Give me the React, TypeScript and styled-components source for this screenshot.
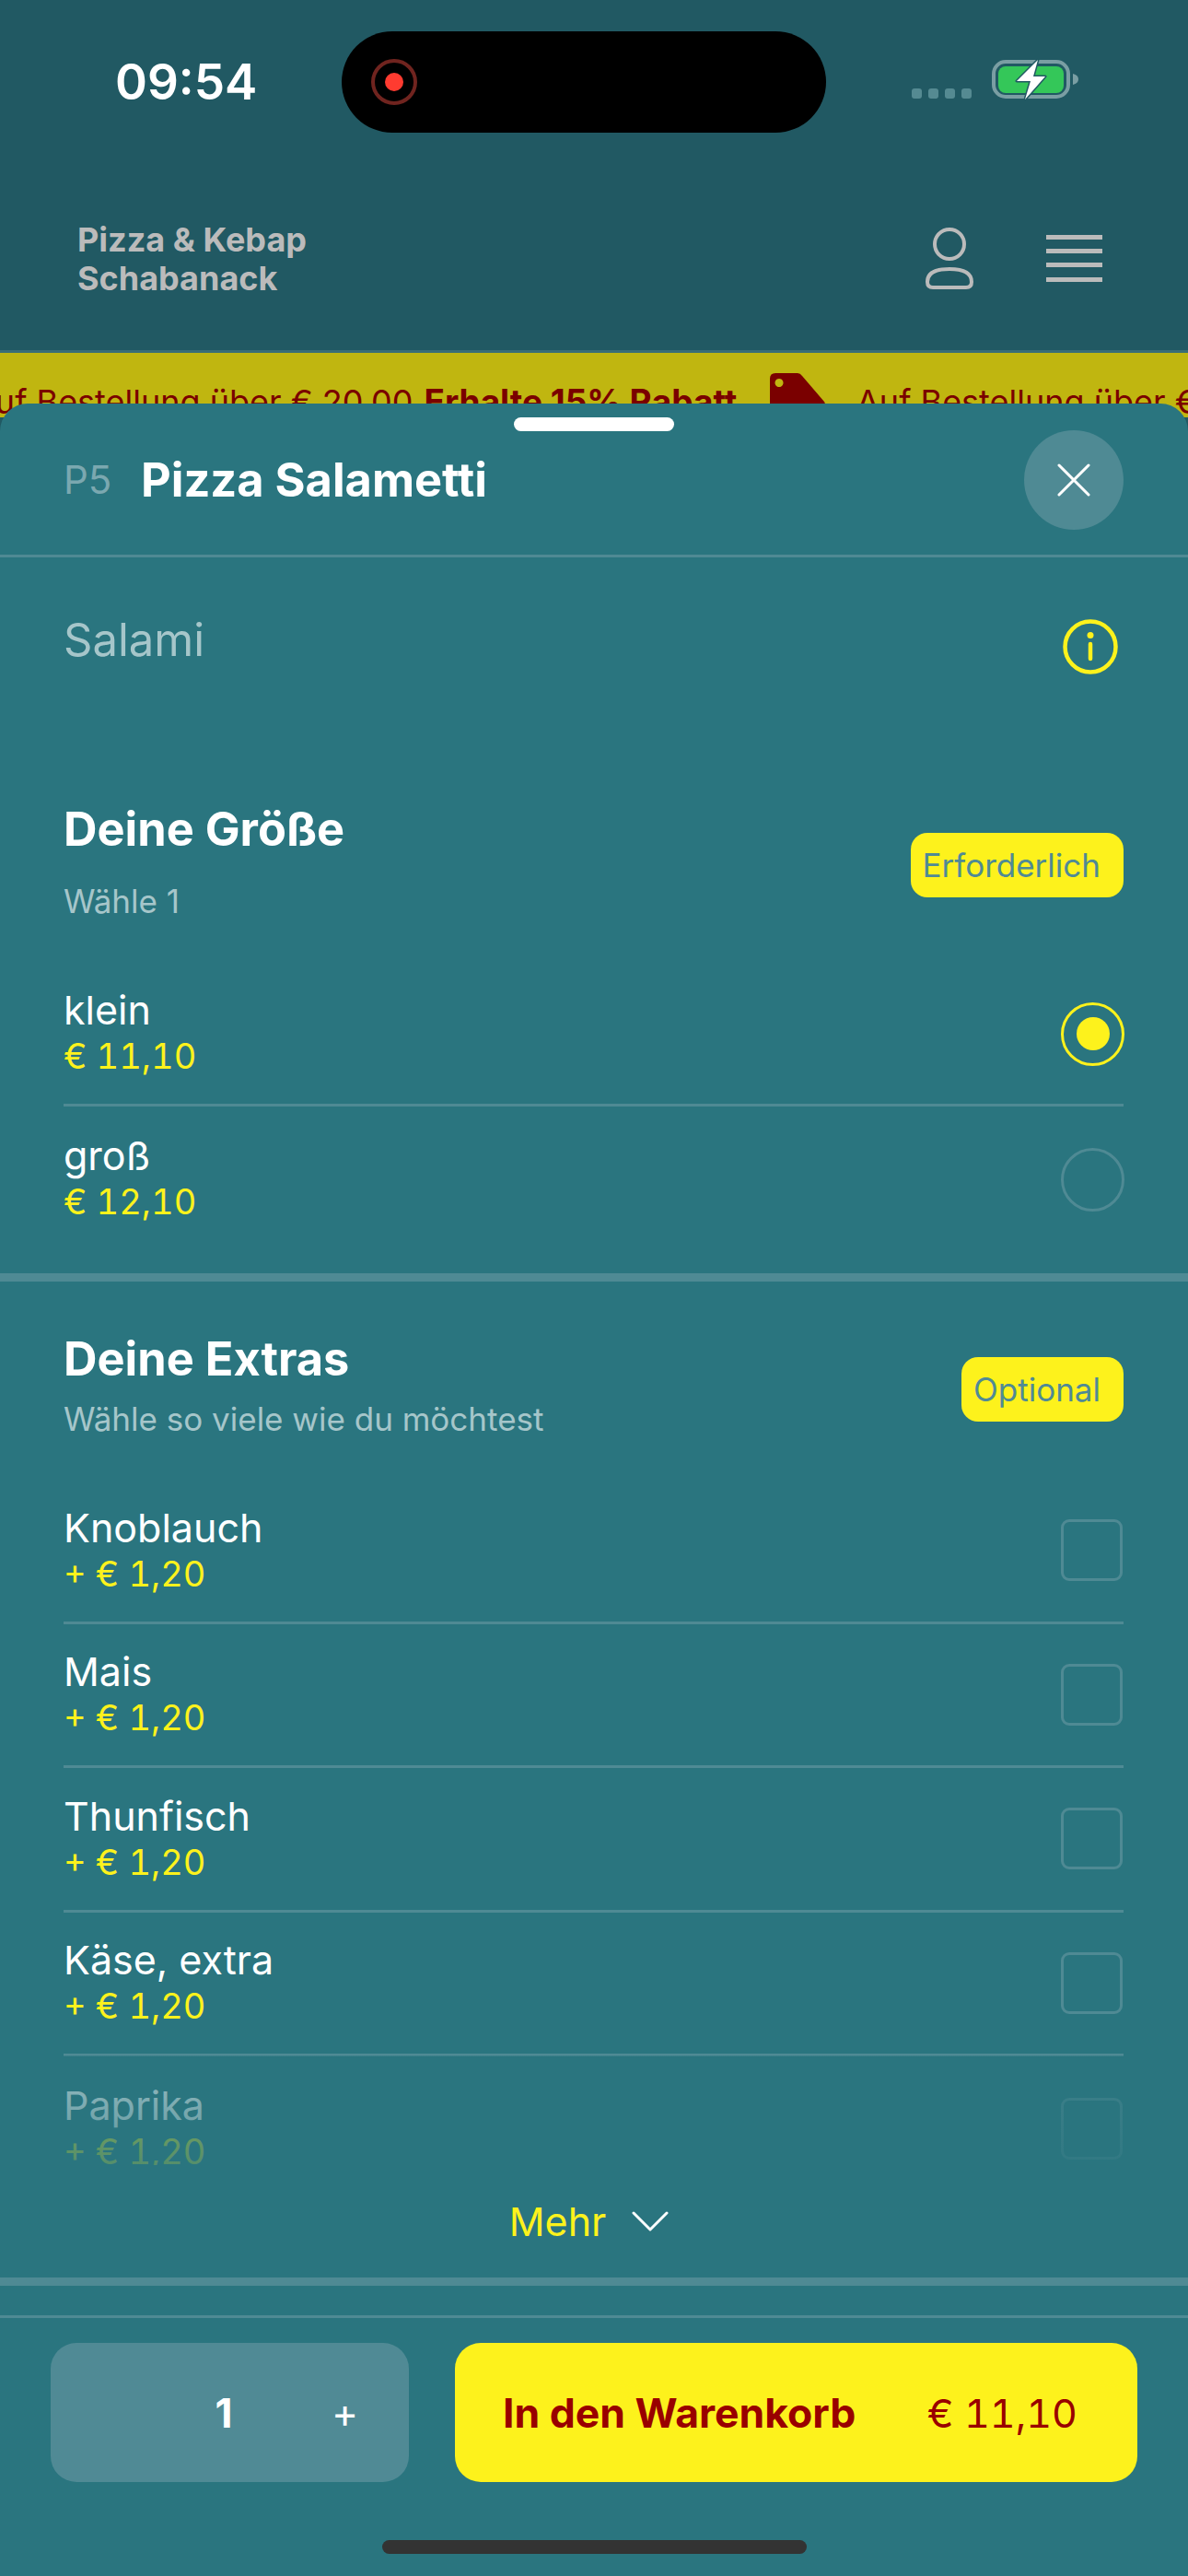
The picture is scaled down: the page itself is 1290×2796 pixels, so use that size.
import React from 'react';
import styled, { createGlobalStyle } from 'styled-components';

const YELLOW = '#fdf21c';
const SHEET = '#2a757f';
const LINE = '#4f8a94';

const GlobalStyle = createGlobalStyle`
    html, body {
        margin: 0;
        padding: 0;
        background: ${SHEET};
    }
    * {
        box-sizing: border-box;
    }
`;

const Page = styled.div`
    position: relative;
    width: 1290px;
    height: 2796px;
    overflow: hidden;
    background: #215963;
    font-family: Inter, "Liberation Sans", sans-serif;
`;

const StatusBar = styled.div`
    display: flex;
    align-items: center;
    height: 110px;
    margin-top: 34px;
    padding-left: 125px;
`;
const Time = styled.span`
    width: 246px;
    color: #fff;
    font-size: 53px;
    font-weight: 600;
`;
const Island = styled.div`
    display: flex;
    align-items: center;
    width: 526px;
    height: 110px;
    padding-left: 32px;
    border-radius: 55px;
    background: #000;
`;
const RecRing = styled.div`
    display: flex;
    align-items: center;
    justify-content: center;
    width: 50px;
    height: 50px;
    border: 4px solid #70241f;
    border-radius: 50%;
    &::after {
        content: '';
        width: 20px;
        height: 20px;
        border-radius: 50%;
        background: #ff3b30;
    }
`;
const SignalDots = styled.div`
    display: flex;
    gap: 7px;
    margin: 25px 22px 0 93px;
`;
const SignalDot = styled.span`
    width: 11px;
    height: 11px;
    border-radius: 3px;
    background: #558a92;
`;
const BatteryBox = styled.div`
    display: flex;
    margin-bottom: 4px;
`;

const Header = styled.header`
    display: flex;
    align-items: center;
    justify-content: space-between;
    height: 239px;
    padding: 38px 93px 0 84px;
    border-bottom: 3px solid #3a6e76;
`;
const Brand = styled.div`
    color: #bbb;
    font-size: 36px;
    font-weight: 700;
    line-height: 42px;
`;
const HeaderIcons = styled.div`
    display: flex;
    align-items: center;
    gap: 78px;
`;

const Banner = styled.div`
    display: flex;
    align-items: flex-start;
    height: 70px;
    margin-left: -30px;
    padding-top: 31px;
    overflow: hidden;
    background: #c0b610;
    color: #7a0000;
    font-size: 36px;
    line-height: 44px;
    white-space: nowrap;
`;
const BannerItem = styled.div`
    display: flex;
    flex: none;
    width: 960px;
    gap: 12px;
    b {
        font-size: 37px;
        font-weight: 700;
    }
    svg {
        flex: none;
        margin: -9px 0 0 24px;
    }
`;

const Sheet = styled.section`
    position: absolute;
    top: 438px;
    left: 0;
    right: 0;
    bottom: 0;
    display: flex;
    flex-direction: column;
    border-radius: 30px 30px 0 0;
    background: ${SHEET};
`;
const Handle = styled.div`
    align-self: center;
    flex: none;
    width: 174px;
    height: 15px;
    margin-top: 15px;
    border-radius: 8px;
    background: #fff;
`;
const SheetTitle = styled.div`
    display: flex;
    align-items: center;
    flex: none;
    height: 137px;
    padding: 0 70px 28px 69px;
    border-bottom: 3px solid ${LINE};
`;
const Code = styled.span`
    width: 84px;
    margin-bottom: 2px;
    color: #7ba8b0;
    font-size: 42px;
`;
const Title = styled.h1`
    flex: 1;
    margin: 0 0 2px;
    color: #fff;
    font-size: 50.500px;
    font-weight: 700;
`;
const CloseButton = styled.button`
    display: flex;
    align-items: center;
    justify-content: center;
    width: 108px;
    height: 108px;
    padding: 0;
    border: 0;
    border-radius: 50%;
    background: ${LINE};
`;

const Description = styled.div`
    display: flex;
    align-items: flex-start;
    justify-content: space-between;
    flex: none;
    height: 266px;
    padding: 60px 76px 0 69px;
    color: #a6c6ca;
    font-size: 49px;
    line-height: 60px;
    svg {
        margin-top: 7px;
    }
`;

const Section = styled.div<{ $top?: number }>`
    flex: none;
    padding: ${(props) => props.$top || 0}px 70px 0 69px;
`;
const SectionHead = styled.div`
    display: flex;
    align-items: center;
    justify-content: space-between;
    padding-bottom: 45px;
`;
const SectionTitle = styled.h2`
    margin: 0;
    color: #fff;
    font-size: 50.500px;
    font-weight: 700;
    line-height: 58px;
`;
const SectionHint = styled.div<{ $gap: number }>`
    margin-top: ${(props) => props.$gap}px;
    color: #a6c6ca;
    font-size: 35px;
    line-height: 42px;
`;
const Badge = styled.span`
    margin-top: 8px;
    padding: 0 25px 0 13px;
    height: 70px;
    border-radius: 18px;
    background: ${YELLOW};
    color: #508a95;
    font-size: 35px;
    line-height: 70px;
`;

const OptionRow = styled.div`
    display: flex;
    align-items: center;
    justify-content: space-between;
    height: 156.5px;
    border-bottom: 3px solid ${LINE};
    &:last-child {
        border-bottom: 0;
    }
`;
const OptionName = styled.div`
    color: #fff;
    font-size: 43px;
    line-height: 50px;
`;
const OptionPrice = styled.div`
    color: ${YELLOW};
    font-size: 38px;
    font-variant-numeric: tabular-nums;
    line-height: 50px;
`;
const Radio = styled.span<{ $active?: boolean }>`
    display: flex;
    align-items: center;
    justify-content: center;
    width: 69px;
    height: 69px;
    margin: 3px -1px 0 0;
    border: 3px solid ${(props) => (props.$active ? YELLOW : LINE)};
    border-radius: 50%;
    &::after {
        content: '';
        display: ${(props) => (props.$active ? 'block' : 'none')};
        width: 36px;
        height: 36px;
        border-radius: 50%;
        background: ${YELLOW};
    }
`;
const Checkbox = styled.span`
    width: 67px;
    height: 67px;
    margin-right: 1px;
    border: 3px solid ${LINE};
    border-radius: 9px;
`;

const ThickLine = styled.div<{ $top?: number }>`
    flex: none;
    height: 9px;
    margin-top: ${(props) => props.$top || 0}px;
    background: ${LINE};
`;
const ExtrasList = styled.div`
    position: relative;
    height: 744px;
    overflow: hidden;
    &::after {
        content: '';
        position: absolute;
        left: -70px;
        right: -70px;
        top: 625px;
        bottom: 0;
        background: linear-gradient(to bottom, rgba(42, 117, 127, 0.45), rgba(42, 117, 127, 0.8));
    }
`;
const MoreRow = styled.div`
    display: flex;
    align-items: center;
    justify-content: center;
    gap: 28px;
    height: 122px;
    padding-right: 10px;
    color: ${YELLOW};
    font-size: 43px;
`;

const Footer = styled.div`
    display: flex;
    flex-direction: column;
    flex: none;
    margin-top: 32px;
    padding: 27px 55px 0;
    border-top: 3px solid ${LINE};
`;
const FooterActions = styled.div`
    display: flex;
    gap: 50px;
`;
const Quantity = styled.div`
    display: grid;
    grid-template-columns: 126px 124px 139px;
    align-items: center;
    justify-items: center;
    flex: none;
    width: 389px;
    height: 151px;
    border-radius: 28px;
    background: #508a95;
    color: #fff;
`;
const QuantityValue = styled.span`
    grid-column: 2;
    font-size: 44px;
    font-weight: 700;
`;
const QuantityPlus = styled.span`
    font-size: 44px;
`;
const CartButton = styled.button`
    display: flex;
    align-items: center;
    justify-content: space-between;
    flex: 1;
    height: 151px;
    padding: 0 65px 0 52px;
    border: 0;
    border-radius: 28px;
    background: ${YELLOW};
    color: #990000;
    font-family: inherit;
    font-size: 44.500px;
    b {
        font-weight: 700;
    }
`;
const CartPrice = styled.span`
    font-size: 43px;
    font-variant-numeric: tabular-nums;
`;
const HomeBar = styled.div`
    align-self: center;
    width: 461px;
    height: 15px;
    margin-top: 63px;
    border-radius: 8px;
    background: #333;
`;

const sizes = [
    { name: 'klein', price: '€ 11,10', active: true },
    { name: 'groß', price: '€ 12,10', active: false },
];
const extras = ['Knoblauch', 'Mais', 'Thunfisch', 'Käse, extra', 'Paprika'];

function BatteryIcon() {
    return (
        <svg width="98" height="46" viewBox="0 0 98 46" fill="none">
            <rect x="2" y="3" width="81" height="38" rx="13" stroke="#7a9ea3" strokeWidth="4" />
            <rect x="7" y="8" width="71" height="29" rx="8" fill="#34c759" />
            <path d="M88 16c4 1 6 3 6 6s-2 5-6 6z" fill="#7a9ea3" />
            <path d="M50 1 27 24h15l-6 20 22-25H45z" fill="#fff" stroke="#215963" strokeWidth="3" strokeLinejoin="round" paintOrder="stroke" />
        </svg>
    );
}

function UserIcon() {
    return (
        <svg width="54" height="68" viewBox="0 0 54 68" fill="none" stroke="#bbb" strokeWidth="4">
            <circle cx="27" cy="18" r="16" />
            <path d="M27 45c14 0 24 4 24 14 0 4-2 6-6 6H9c-4 0-6-2-6-6 0-10 10-14 24-14z" />
        </svg>
    );
}

function MenuIcon() {
    return (
        <svg width="61" height="52" viewBox="0 0 61 52" fill="#bbb">
            <rect y="0" width="61" height="5" />
            <rect y="15" width="61" height="5" />
            <rect y="30" width="61" height="5" />
            <rect y="46" width="61" height="5" />
        </svg>
    );
}

function TagIcon() {
    return (
        <svg width="60" height="60" viewBox="0 0 60 60">
            <path
                fillRule="evenodd"
                d="M0 6q0-6 6-6h24q3 0 5 3l24 28q2 3 0 6L40 60H6q-6 0-6-6zM10 6a4.500 4.500 0 1 0 .01 0z"
                fill="#7a0000"
            />
        </svg>
    );
}

function CloseIcon() {
    return (
        <svg width="36" height="36" viewBox="0 0 36 36" stroke="#fff" strokeWidth="3" strokeLinecap="round">
            <path d="M2 2l32 32M34 2 2 34" />
        </svg>
    );
}

function InfoIcon() {
    return (
        <svg width="60" height="60" viewBox="0 0 60 60" fill="none" stroke={YELLOW} strokeWidth="4.500">
            <circle cx="30" cy="30" r="27.500" />
            <circle cx="30" cy="17.500" r="3.500" fill={YELLOW} stroke="none" />
            <path d="M30 27v16" strokeLinecap="round" />
        </svg>
    );
}

function ChevronIcon() {
    return (
        <svg width="40" height="22" viewBox="0 0 40 22" fill="none" stroke="#fff" strokeWidth="3" strokeLinecap="round" strokeLinejoin="round">
            <path d="M2 2l18 18L38 2" />
        </svg>
    );
}

function App() {
    return (
        <Page>
            <GlobalStyle />
            <StatusBar>
                <Time>09:54</Time>
                <Island>
                    <RecRing />
                </Island>
                <SignalDots>
                    <SignalDot />
                    <SignalDot />
                    <SignalDot />
                    <SignalDot />
                </SignalDots>
                <BatteryBox>
                    <BatteryIcon />
                </BatteryBox>
            </StatusBar>
            <Header>
                <Brand>
                    Pizza &amp; Kebap
                    <br />
                    Schabanack
                </Brand>
                <HeaderIcons>
                    <UserIcon />
                    <MenuIcon />
                </HeaderIcons>
            </Header>
            <Banner>
                {[0, 1].map((i) => (
                    <BannerItem key={i}>
                        <span>Auf Bestellung über € 20,00</span>
                        <b>Erhalte 15% Rabatt</b>
                        <TagIcon />
                    </BannerItem>
                ))}
            </Banner>
            <Sheet>
                <Handle />
                <SheetTitle>
                    <Code>P5</Code>
                    <Title>Pizza Salametti</Title>
                    <CloseButton>
                        <CloseIcon />
                    </CloseButton>
                </SheetTitle>
                <Description>
                    Salami
                    <InfoIcon />
                </Description>
                <Section>
                    <SectionHead>
                        <div>
                            <SectionTitle>Deine Größe</SectionTitle>
                            <SectionHint $gap={28}>Wähle 1</SectionHint>
                        </div>
                        <Badge>Erforderlich</Badge>
                    </SectionHead>
                    {sizes.map((s) => (
                        <OptionRow key={s.name}>
                            <div>
                                <OptionName>{s.name}</OptionName>
                                <OptionPrice>{s.price}</OptionPrice>
                            </div>
                            <Radio $active={s.active} />
                        </OptionRow>
                    ))}
                </Section>
                <ThickLine $top={25} />
                <Section $top={55}>
                    <SectionHead>
                        <div>
                            <SectionTitle>Deine Extras</SectionTitle>
                            <SectionHint $gap={15}>Wähle so viele wie du möchtest</SectionHint>
                        </div>
                        <Badge>Optional</Badge>
                    </SectionHead>
                    <ExtrasList>
                        {extras.map((name) => (
                            <OptionRow key={name}>
                                <div>
                                    <OptionName>{name}</OptionName>
                                    <OptionPrice>+ € 1,20</OptionPrice>
                                </div>
                                <Checkbox />
                            </OptionRow>
                        ))}
                    </ExtrasList>
                    <MoreRow>
                        Mehr
                        <ChevronIcon />
                    </MoreRow>
                </Section>
                <ThickLine />
                <Footer>
                    <FooterActions>
                        <Quantity>
                            <QuantityValue>1</QuantityValue>
                            <QuantityPlus>+</QuantityPlus>
                        </Quantity>
                        <CartButton>
                            <b>In den Warenkorb</b>
                            <CartPrice>€ 11,10</CartPrice>
                        </CartButton>
                    </FooterActions>
                    <HomeBar />
                </Footer>
            </Sheet>
        </Page>
    );
}

export default App;
